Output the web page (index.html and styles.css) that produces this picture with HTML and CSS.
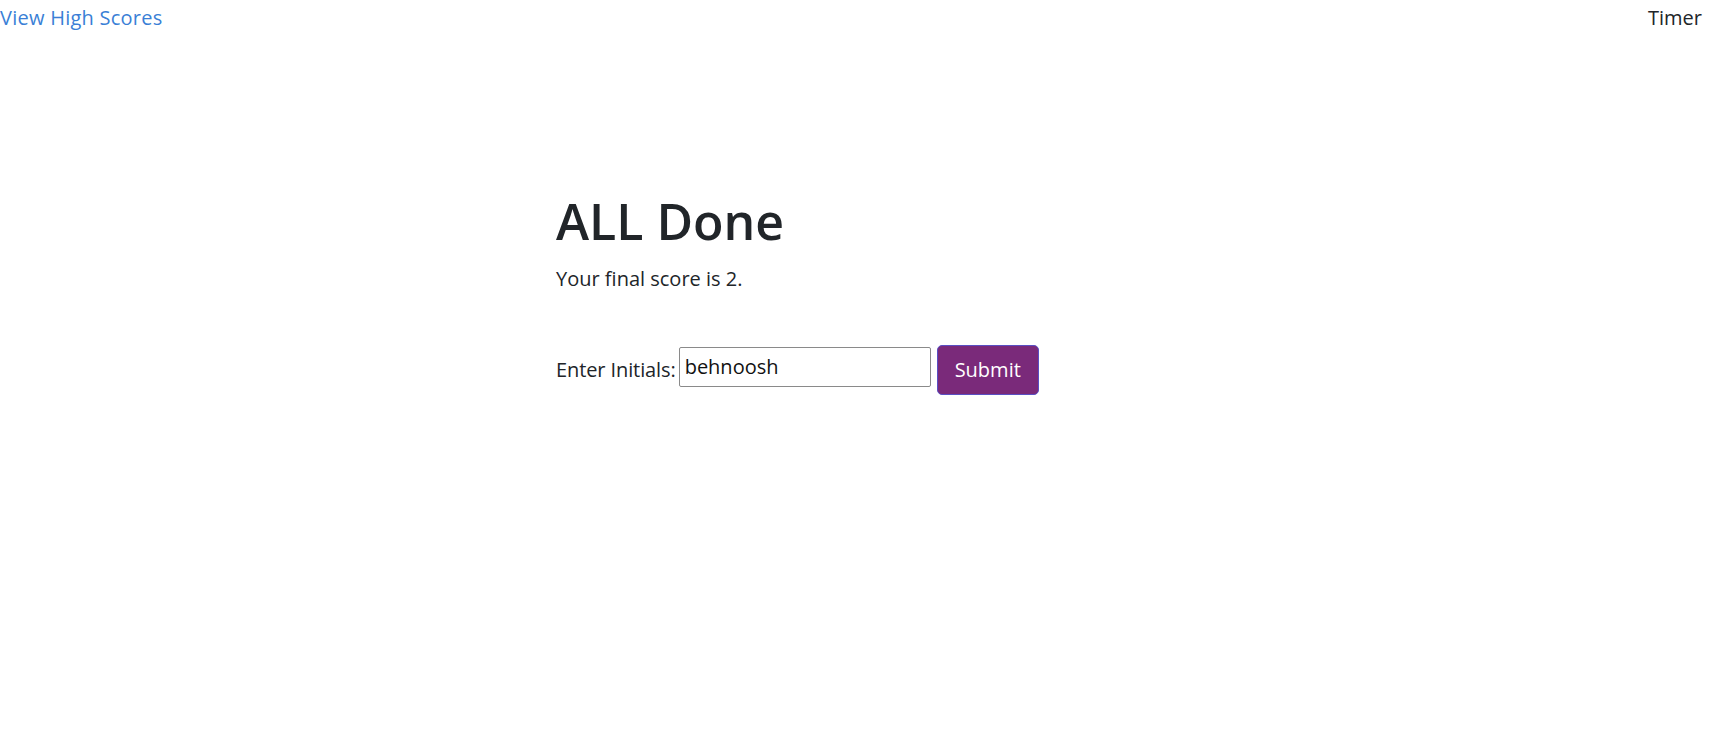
FILE: index.html
```html
<!DOCTYPE html>
<html lang="en">
<head>
<meta charset="utf-8">
<title>Quiz</title>
<link rel="stylesheet" href="styles.css">
</head>
<body>
<header class="topbar">
  <a class="scores-link" href="#">View High Scores</a>
  <span class="timer">Timer</span>
</header>
<main class="main">
  <section class="done">
    <h1 class="done-title">ALL Done</h1>
    <p class="done-score">Your final score is 2.</p>
    <form class="initials-form">
      <label class="initials-label" for="initials">Enter Initials:</label>
      <input class="initials-input" id="initials" type="text" value="behnoosh">
      <button class="submit-btn" type="button">Submit</button>
    </form>
  </section>
</main>
</body>
</html>
```
FILE: styles.css
```css
* { box-sizing: border-box; }
html, body { margin: 0; padding: 0; }
body {
  width: 1722px;
  height: 746px;
  background: #fff;
  color: #212529;
  font-family: "Open Sans", "Noto Sans", sans-serif;
  font-size: 20px;
  line-height: 30px;
}
.topbar {
  display: flex;
  justify-content: space-between;
  align-items: flex-start;
  padding: 3px 20px 0 0;
}
.scores-link {
  color: #3a7fd6;
  text-decoration: none;
  letter-spacing: 0.25px;
}
.timer { color: #212529; }
.main {
  padding-top: 158px;
  display: flex;
  justify-content: center;
}
.done {
  width: 610px;
}
.done-title {
  margin: 0 0 13px;
  font-size: 50px;
  line-height: 60px;
  font-weight: 600;
  color: #212529;
}
.done-score {
  margin: 0;
}
.initials-form {
  margin-top: 51px;
  display: flex;
  align-items: center;
}
.initials-label {
  margin-right: 3px;
  letter-spacing: -0.1px;
}
.initials-input {
  width: 252px;
  height: 40px;
  margin-bottom: 7px;
  border: 1px solid #8a8a8a;
  border-radius: 2px;
  padding: 0 5px;
  font-family: inherit;
  font-size: 20px;
  color: #111;
  background: #fff;
}
.submit-btn {
  margin-left: 6px;
  height: 50px;
  padding: 0 17px;
  border: 1px solid #5a4fc4;
  border-radius: 5px;
  background: #7a2a7a;
  color: #fff;
  font-family: inherit;
  font-size: 20px;
  line-height: 30px;
}
```
